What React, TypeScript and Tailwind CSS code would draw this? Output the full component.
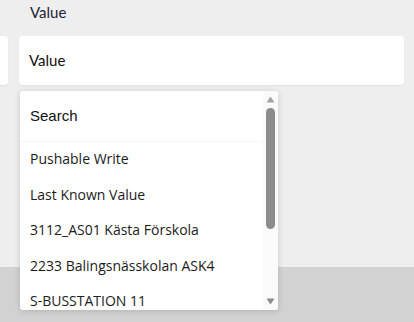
import React from "react";

const options = [
  "Pushable Write",
  "Last Known Value",
  "3112_AS01 Kästa Förskola",
  "2233 Balingsnässkolan ASK4",
  "S-BUSSTATION 11",
];

export default function App() {
  return (
    <div className="relative w-[414px] h-[322px] overflow-hidden bg-[#eeeeee]">
      {/* form area */}
      <div className="h-[267px] flex flex-col">
        <div className="pl-[30px] pt-[1px] h-[36px] text-[15px] leading-[22px] text-[#1d2433] font-['Lato',sans-serif]">
          Value
        </div>
        <div className="flex gap-[11px] -ml-[12px] pr-[10px]">
          <div className="w-[20px] h-[49px] bg-white rounded-[4px] shadow-[0_1px_2px_rgba(0,0,0,0.06)]" />
          <div className="flex-1 h-[49px] bg-white rounded-[4px] shadow-[0_1px_2px_rgba(0,0,0,0.06)] flex items-center pl-[10px]">
            <span className="text-[15px] text-[#111] font-['Lato',sans-serif]">Value</span>
          </div>
        </div>
      </div>
      <div className="h-[55px] bg-[#d2d2d2]" />

      {/* dropdown */}
      <div className="absolute left-[20px] top-[91px] w-[258px] h-[219px] bg-white rounded-[3px] shadow-[0_1px_6px_rgba(0,0,0,0.16)] flex overflow-hidden">
        <div className="flex-1 flex flex-col overflow-hidden">
          <div className="shrink-0 h-[50px] flex items-center pl-[10px] shadow-[0_1px_2px_rgba(0,0,0,0.05)] rounded-br-[3px]">
            <span className="text-[15px] text-[#111] font-['Liberation_Sans',sans-serif]">Search</span>
          </div>
          <div className="shrink-0 flex flex-col">
            {options.map((o) => (
              <div
                key={o}
                className="shrink-0 h-[35.5px] flex items-center pl-[10px] text-[14px] text-[#1b1b1b] font-['Open_Sans',sans-serif] whitespace-nowrap"
              >
                {o}
              </div>
            ))}
          </div>
        </div>
        <div className="w-[15px] bg-[#fafafa] flex flex-col items-center pt-[5px] pb-[5px]">
          <svg width="9" height="7" viewBox="0 0 9 7" className="shrink-0">
            <path d="M4.5 0.5 L8.5 6.5 L0.5 6.5 Z" fill="#a3a3a3" />
          </svg>
          <div className="w-[9px] h-[121px] mt-[5px] rounded-full bg-[#8c8c8c]" />
          <div className="flex-1" />
          <svg width="9" height="7" viewBox="0 0 9 7" className="shrink-0">
            <path d="M0.5 0.5 L8.5 0.5 L4.5 6.5 Z" fill="#8c8c8c" />
          </svg>
        </div>
      </div>
    </div>
  );
}
